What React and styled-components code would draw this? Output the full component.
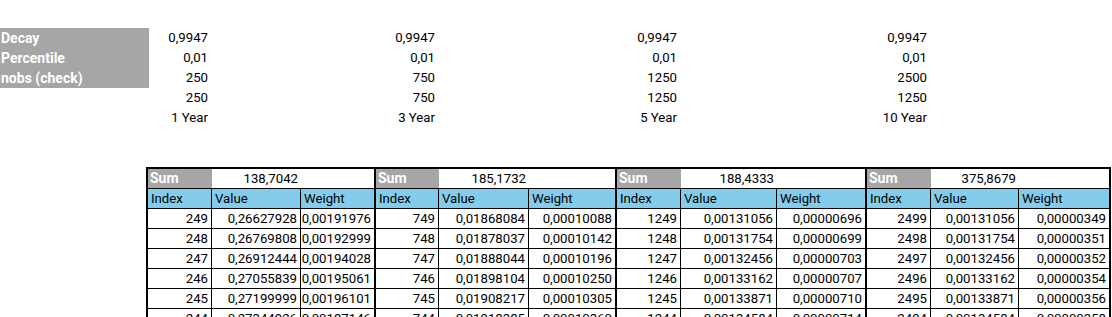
import React from "react";
import styled, { createGlobalStyle } from "styled-components";

const GlobalStyle = createGlobalStyle`
  html, body {
    margin: 0;
    padding: 0;
    background: #fff;
    overflow: hidden;
  }
  body {
    font-family: Roboto, "Liberation Sans", sans-serif;
    font-size: 13.2px;
    color: #000;
  }
`;

const COLS = ["147px", "64px", "89px", "75px", "63px", "90px", "88px", "64px", "96px", "90px", "64px", "88px", "92px"];

const params = [
  { label: "Decay", values: ["0,9947", "0,9947", "0,9947", "0,9947"] },
  { label: "Percentile", values: ["0,01", "0,01", "0,01", "0,01"] },
  { label: "nobs (check)", values: ["250", "750", "1250", "2500"] },
  { label: "", values: ["250", "750", "1250", "1250"] },
  { label: "", values: ["1 Year", "3 Year", "5 Year", "10 Year"] },
];

const tables = [
  {
    sum: "138,7042",
    cols: "64px 89px 73px",
    rows: [
      ["249", "0,26627928", "0,00191976"],
      ["248", "0,26769808", "0,00192999"],
      ["247", "0,26912444", "0,00194028"],
      ["246", "0,27055839", "0,00195061"],
      ["245", "0,27199999", "0,00196101"],
      ["244", "0,27344926", "0,00197146"],
      ["243", "0,27490625", "0,00198196"],
    ],
  },
  {
    sum: "185,1732",
    cols: "63px 90px 86px",
    rows: [
      ["749", "0,01868084", "0,00010088"],
      ["748", "0,01878037", "0,00010142"],
      ["747", "0,01888044", "0,00010196"],
      ["746", "0,01898104", "0,00010250"],
      ["745", "0,01908217", "0,00010305"],
      ["744", "0,01918385", "0,00010360"],
      ["743", "0,01928607", "0,00010415"],
    ],
  },
  {
    sum: "188,4333",
    cols: "64px 96px 88px",
    rows: [
      ["1249", "0,00131056", "0,00000696"],
      ["1248", "0,00131754", "0,00000699"],
      ["1247", "0,00132456", "0,00000703"],
      ["1246", "0,00133162", "0,00000707"],
      ["1245", "0,00133871", "0,00000710"],
      ["1244", "0,00134584", "0,00000714"],
      ["1243", "0,00135301", "0,00000718"],
    ],
  },
  {
    sum: "375,8679",
    cols: "64px 88px 90px",
    rows: [
      ["2499", "0,00131056", "0,00000349"],
      ["2498", "0,00131754", "0,00000351"],
      ["2497", "0,00132456", "0,00000352"],
      ["2496", "0,00133162", "0,00000354"],
      ["2495", "0,00133871", "0,00000356"],
      ["2494", "0,00134584", "0,00000358"],
      ["2493", "0,00135301", "0,00000360"],
    ],
  },
];

const App = () => {
  return (
    <>
      <GlobalStyle />
      <Sheet>
        <ParamGrid>
          {params.map((p, i) => (
            <React.Fragment key={i}>
              <Label filled={i < 3}>{p.label}</Label>
              {p.values.map((v, j) => (
                <React.Fragment key={j}>
                  <Num>{v}</Num>
                  {j < 3 && (
                    <>
                      <Blank />
                      <Blank />
                    </>
                  )}
                </React.Fragment>
              ))}
            </React.Fragment>
          ))}
        </ParamGrid>

        <Tables>
          {tables.map((t, i) => (
            <Table key={i} cols={t.cols}>
              <SumLabel>Sum</SumLabel>
              <SumValue>{t.sum}</SumValue>
              <SumRest />
              <Head>Index</Head>
              <Head>Value</Head>
              <Head last>Weight</Head>
              {t.rows.map((r, k) =>
                r.map((c, n) => (
                  <Cell key={k + "-" + n} last={n === 2}>
                    {c}
                  </Cell>
                ))
              )}
            </Table>
          ))}
        </Tables>
      </Sheet>
    </>
  );
};

export default App;

const Sheet = styled.div`
  width: 1112px;
  height: 317px;
  overflow: hidden;
  padding-top: 28px;
  box-sizing: border-box;
`;

const ParamGrid = styled.div`
  display: grid;
  grid-template-columns: ${COLS.slice(0, 11).join(" ")};
  grid-auto-rows: 20px;
`;

const Label = styled.div`
  background: ${(p) => (p.filled ? "#a6a6a6" : "transparent")};
  color: #fff;
  font-weight: 700;
  font-size: 14px;
  line-height: 20px;
  padding-left: 1px;
  width: 148px;
  white-space: nowrap;
`;

const Num = styled.div`
  text-align: right;
  line-height: 20px;
  padding-right: 3px;
  white-space: nowrap;
`;

const Blank = styled.div``;

const Tables = styled.div`
  display: flex;
  margin-top: 39px;
  margin-left: 146px;
  width: max-content;
  border-top: 2px solid #000;
  border-left: 2px solid #000;
`;

const Table = styled.div`
  display: grid;
  grid-template-columns: ${(p) => p.cols};
  grid-auto-rows: 20px;
  border-right: 2px solid #000;
`;

const SumLabel = styled.div`
  background: #a6a6a6;
  color: #fff;
  font-weight: 700;
  font-size: 14px;
  line-height: 19px;
  padding-left: 2px;
  border-bottom: 1px solid #000;
`;

const SumValue = styled.div`
  text-align: right;
  line-height: 19px;
  padding-right: 3px;
  border-bottom: 1px solid #000;
`;

const SumRest = styled.div`
  border-bottom: 1px solid #000;
`;

const Head = styled.div`
  background: #83cceb;
  line-height: 19px;
  padding-left: 3px;
  border-bottom: 1px solid #000;
  border-right: ${(p) => (p.last ? "none" : "1px solid #000")};
  white-space: nowrap;
`;

const Cell = styled.div`
  text-align: right;
  line-height: 19px;
  padding-right: 3px;
  border-bottom: 1px solid #000;
  border-right: ${(p) => (p.last ? "none" : "1px solid #000")};
  white-space: nowrap;
`;
